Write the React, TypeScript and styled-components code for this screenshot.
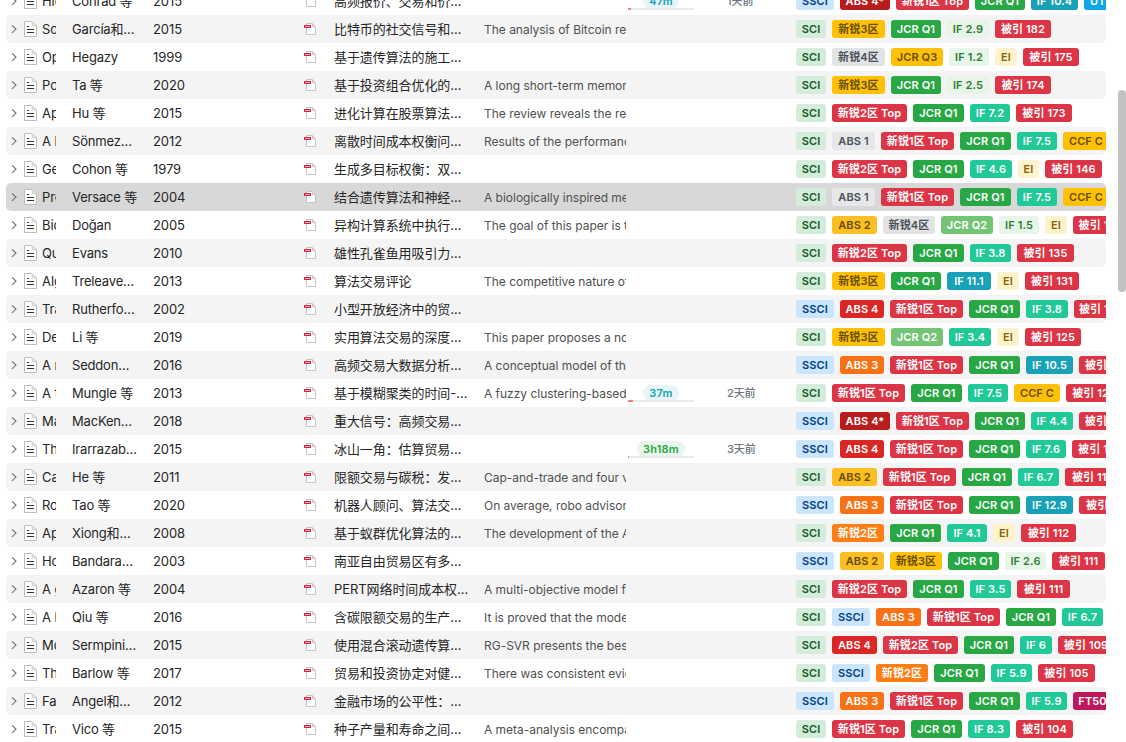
import React from 'react';
import styled, { createGlobalStyle } from 'styled-components';

const Global = createGlobalStyle`
  * { box-sizing: border-box; }
  html, body { margin: 0; padding: 0; height: 742px; overflow: hidden; background: #fff; }
  body { font-family: Inter, "Noto Sans CJK SC", sans-serif; font-size: 13px; color: #262626; }
`;

const Page = styled.main`
  display: flex;
  width: 1126px;
  height: 742px;
  overflow: hidden;
  background: #fff;
`;
const Table = styled.div`
  width: 1100px;
  margin: -13px 12px 0 6px;
  flex: none;
`;
const Row = styled.div<{ $bg: string }>`
  display: grid;
  grid-template-columns: 18px 18px 30px 81px 149px 32px 150px 144px 66px 64px 38px 310px;
  align-items: center;
  height: 28px;
  border-radius: 5px;
  overflow: hidden;
  background: ${p => p.$bg};
  white-space: nowrap;
`;
const Icon = styled.svg`
  display: block;
  overflow: visible;
`;
const Cell = styled.div`
  line-height: 28px;
  height: 28px;
  overflow: hidden;
  letter-spacing: -0.08px;
`;
const Title = styled(Cell)`
  width: 14px;
`;
const Author = styled(Cell)`
  letter-spacing: -0.18px;
`;
const Abstract = styled(Cell)`
  width: 142px;
  font-size: 12px;
  line-height: 29px;
  color: #505050;
  letter-spacing: -0.02px;
`;
const Reading = styled.div`
  display: flex;
  flex-direction: column;
  align-items: center;
  padding-top: 1px;
`;
const Pill = styled.span<{ $green?: boolean }>`
  height: 16px;
  line-height: 16px;
  padding: 0 6px;
  border-radius: 8px;
  font-size: 11px;
  font-weight: 600;
  letter-spacing: 0.2px;
  color: ${p => (p.$green ? '#28a745' : '#17a2b8')};
  background: ${p => (p.$green ? '#e9f6ec' : '#e7f5f8')};
`;
const Track = styled.div`
  width: 66px;
  height: 2px;
  margin-top: -1px;
  background: #e9ecef;
  z-index: 1;
`;
const Fill = styled.div`
  height: 2px;
  background: #f08080;
`;
const Ago = styled(Cell)`
  padding-left: 33px;
  font-size: 11px;
  font-weight: 500;
  color: #6c757d;
  overflow: visible;
`;
const Tags = styled.div`
  display: flex;
  gap: 6px;
  overflow: hidden;
`;
const Tag = styled.span<{ $fg: string; $bg: string; $w: number }>`
  flex: none;
  width: ${p => p.$w}px;
  height: 18px;
  line-height: 18px;
  border-radius: 3px;
  text-align: center;
  font-size: 11px;
  font-weight: 600;
  letter-spacing: 0.12px;
  color: ${p => p.$fg};
  background: ${p => p.$bg};
`;
const Scrollbar = styled.div`
  width: 8px;
  height: 202px;
  margin-top: 90px;
  border-radius: 4px;
  background: #c1c1c1;
`;

function tagStyle(t: string): { fg: string; bg: string } {
  if (t === 'SCI') return { fg: '#155724', bg: '#d4edda' };
  if (t === 'SSCI') return { fg: '#004085', bg: '#cce5ff' };
  if (t === 'EI') return { fg: '#856404', bg: '#fff3cd' };
  if (t === 'UTD24') return { fg: '#fff', bg: '#0ea5e9' };
  if (t === 'FT50') return { fg: '#fff', bg: '#be185d' };
  if (t.startsWith('CCF')) return { fg: '#664d03', bg: '#ffc107' };
  if (t.startsWith('ABS')) {
    if (t === 'ABS 4*') return { fg: '#fff', bg: '#b91c1c' };
    if (t === 'ABS 4') return { fg: '#fff', bg: '#dc2626' };
    if (t === 'ABS 3') return { fg: '#fff', bg: '#f97316' };
    if (t === 'ABS 2') return { fg: '#664d03', bg: '#fbbf24' };
    return { fg: '#495057', bg: '#e5e7eb' };
  }
  if (t.startsWith('JCR')) {
    if (t.endsWith('1')) return { fg: '#fff', bg: '#28a745' };
    if (t.endsWith('2')) return { fg: '#fff', bg: '#74c476' };
    return { fg: '#664d03', bg: '#ffc107' };
  }
  if (t.startsWith('IF')) {
    const v = parseFloat(t.slice(3));
    if (v >= 10) return { fg: '#fff', bg: '#17a2b8' };
    if (v >= 3) return { fg: '#fff', bg: '#20c997' };
    return { fg: '#2e7d32', bg: '#e8f5e9' };
  }
  if (t.endsWith('Top') || t.startsWith('被引')) return { fg: '#fff', bg: '#dc3545' };
  if (t.includes('2区')) return { fg: '#fff', bg: '#fd7e14' };
  if (t.includes('3区')) return { fg: '#664d03', bg: '#ffc107' };
  return { fg: '#495057', bg: '#e2e3e5' };
}

type Read = { time: string; ago: string; fill: number; green?: boolean };
type Item = [string, string, string, string, string, string, Read?];

// Tags are written as "label:width", separated by "|".
const items: Item[] = [
  ['High', 'Conrad 等', '2015', '高频报价、交易和价…', '', 'SSCI:38|ABS 4*:50|新锐1区 Top:73|JCR Q1:50|IF 10.4:47|UTD24:50', { time: '47m', ago: '1天前', fill: 3 }],
  ['Social', 'García和…', '2015', '比特币的社交信号和…', 'The analysis of Bitcoin returns', 'SCI:30|新锐3区:53|JCR Q1:50|IF 2.9:42|被引 182:56'],
  ['Optim', 'Hegazy', '1999', '基于遗传算法的施工…', '', 'SCI:30|新锐4区:53|JCR Q3:52|IF 1.2:40|EI:22|被引 175:56'],
  ['Portfolio', 'Ta 等', '2020', '基于投资组合优化的…', 'A long short-term memory', 'SCI:30|新锐3区:53|JCR Q1:50|IF 2.5:42|被引 174:56'],
  ['Appl', 'Hu 等', '2015', '进化计算在股票算法…', 'The review reveals the research', 'SCI:30|新锐2区 Top:75|JCR Q1:51|IF 7.2:40|被引 173:56'],
  ['A hybrid', 'Sönmez…', '2012', '离散时间成本权衡问…', 'Results of the performance', 'SCI:30|ABS 1:43|新锐1区 Top:73|JCR Q1:51|IF 7.5:40|CCF C:46'],
  ['Gener', 'Cohon 等', '1979', '生成多目标权衡：双…', '', 'SCI:30|新锐2区 Top:75|JCR Q1:51|IF 4.6:42|EI:21|被引 146:57'],
  ['Predict', 'Versace 等', '2004', '结合遗传算法和神经…', 'A biologically inspired method', 'SCI:30|ABS 1:43|新锐1区 Top:73|JCR Q1:51|IF 7.5:40|CCF C:46'],
  ['Biobj', 'Doğan', '2005', '异构计算系统中执行…', 'The goal of this paper is to', 'SCI:30|ABS 2:45|新锐4区:52|JCR Q2:52|IF 1.5:40|EI:22|被引 141:53'],
  ['Quant', 'Evans', '2010', '雄性孔雀鱼用吸引力…', '', 'SCI:30|新锐2区 Top:75|JCR Q1:51|IF 3.8:41|被引 135:57'],
  ['Algo', 'Treleave…', '2013', '算法交易评论', 'The competitive nature of', 'SCI:30|新锐3区:53|JCR Q1:50|IF 11.1:44|EI:22|被引 131:54'],
  ['Trade', 'Rutherfo…', '2002', '小型开放经济中的贸…', '', 'SSCI:38|ABS 4:44|新锐1区 Top:73|JCR Q1:51|IF 3.8:42|被引 128:54'],
  ['Deep', 'Li 等', '2019', '实用算法交易的深度…', 'This paper proposes a novel', 'SCI:30|新锐3区:53|JCR Q2:52|IF 3.4:42|EI:22|被引 125:56'],
  ['A mod', 'Seddon…', '2016', '高频交易大数据分析…', 'A conceptual model of the', 'SSCI:38|ABS 3:44|新锐1区 Top:73|JCR Q1:51|IF 10.5:47|被引 123:56'],
  ['A fuzzy', 'Mungle 等', '2013', '基于模糊聚类的时间-…', 'A fuzzy clustering-based', 'SCI:30|新锐1区 Top:73|JCR Q1:51|IF 7.5:40|CCF C:46|被引 121:54', { time: '37m', ago: '2天前', fill: 5 }],
  ['Mater', 'MacKen…', '2018', '重大信号：高频交易…', '', 'SSCI:38|ABS 4*:50|新锐1区 Top:73|JCR Q1:50|IF 4.4:42|被引 120:56'],
  ['The', 'Irarrazab…', '2015', '冰山一角：估算贸易…', '', 'SSCI:38|ABS 4:44|新锐1区 Top:73|JCR Q1:51|IF 7.6:40|被引 118:54', { time: '3h18m', ago: '3天前', fill: 1, green: true }],
  ['Carbon', 'He 等', '2011', '限额交易与碳税：发…', 'Cap-and-trade and four variants', 'SCI:30|ABS 2:45|新锐1区 Top:73|JCR Q1:50|IF 6.7:41|被引 114:56'],
  ['Robo', 'Tao 等', '2020', '机器人顾问、算法交…', 'On average, robo advisors', 'SSCI:38|ABS 3:44|新锐1区 Top:73|JCR Q1:51|IF 12.9:47|被引 113:56'],
  ['Appl', 'Xiong和…', '2008', '基于蚁群优化算法的…', 'The development of the ACO', 'SCI:30|新锐2区:52|JCR Q1:51|IF 4.1:40|EI:22|被引 112:55'],
  ['How', 'Bandara…', '2003', '南亚自由贸易区有多…', '', 'SSCI:38|ABS 2:44|新锐3区:52|JCR Q1:51|IF 2.6:41|被引 111:53'],
  ['A gen', 'Azaron 等', '2004', 'PERT网络时间成本权…', 'A multi-objective model for', 'SCI:30|新锐2区 Top:75|JCR Q1:51|IF 3.5:41|被引 111:53'],
  ['A low', 'Qiu 等', '2016', '含碳限额交易的生产…', 'It is proved that the model', 'SCI:30|SSCI:38|ABS 3:45|新锐1区 Top:73|JCR Q1:50|IF 6.7:41'],
  ['Model', 'Sermpini…', '2015', '使用混合滚动遗传算…', 'RG-SVR presents the best', 'SCI:30|ABS 4:45|新锐2区 Top:75|JCR Q1:50|IF 6:32|被引 109:56'],
  ['The', 'Barlow 等', '2017', '贸易和投资协定对健…', 'There was consistent evidence', 'SCI:30|SSCI:38|新锐2区:52|JCR Q1:51|IF 5.9:41|被引 105:57'],
  ['Fair', 'Angel和…', '2012', '金融市场的公平性：…', '', 'SSCI:38|ABS 3:44|新锐1区 Top:73|JCR Q1:51|IF 5.9:41|FT50:39'],
  ['Trade', 'Vico 等', '2015', '种子产量和寿命之间…', 'A meta-analysis encompassing', 'SCI:30|新锐1区 Top:73|JCR Q1:51|IF 8.3:42|被引 104:57'],
];

const Chevron = () => (
  <Icon width="18" height="28" fill="none" stroke="#6b6b6b" strokeWidth="1.1">
    <path d="M6 10.4 L10 14.1 L6 17.8" />
  </Icon>
);

const DocIcon = () => (
  <Icon width="18" height="28" fill="none">
    <path d="M0.5 6.5 H8 L12.5 11 V21.5 H0.5 Z" fill="#fff" stroke="#bdbdbd" />
    <path d="M8 7 V11 H12 Z" fill="#e0e0e0" stroke="#d2d2d2" strokeWidth="0.8" />
    <path d="M3 11.5 H5 M3 14.5 H10 M3 17.5 H10" stroke="#333" />
  </Icon>
);

const PdfIcon = () => (
  <Icon width="32" height="28" fill="none">
    <path d="M4.5 8.5 H10.5 L13.5 11.5 V19.5 H4.5 Z" fill="#fff" stroke="#c4c4c4" />
    <path d="M10.5 8.5 V11.5 H13.5" stroke="#c4c4c4" />
    <rect x="2.5" y="10.5" width="6" height="2" fill="#f3a5ad" stroke="#d9293b" />
  </Icon>
);

export default function App() {
  return (
    <>
      <Global />
      <Page>
        <Table>
          {items.map(([title, author, year, zh, abs, tags, read], i) => (
            <Row key={i} $bg={i === 7 ? '#d8d8d8' : i % 2 ? '#f4f4f4' : '#fff'}>
              <Chevron />
              <DocIcon />
              <Title>{title}</Title>
              <Author>{author}</Author>
              <Cell>{year}</Cell>
              <PdfIcon />
              <Cell>{zh}</Cell>
              <Abstract>{abs}</Abstract>
              {read ? (
                <Reading>
                  <Pill $green={read.green}>{read.time}</Pill>
                  <Track><Fill style={{ width: read.fill }} /></Track>
                </Reading>
              ) : <span />}
              <Ago>{read?.ago}</Ago>
              <span />
              <Tags>
                {tags.split('|').map(entry => {
                  const [label, w] = entry.split(':');
                  const s = tagStyle(label);
                  return <Tag key={label} $fg={s.fg} $bg={s.bg} $w={Number(w)}>{label}</Tag>;
                })}
              </Tags>
            </Row>
          ))}
        </Table>
        <Scrollbar />
      </Page>
    </>
  );
}
